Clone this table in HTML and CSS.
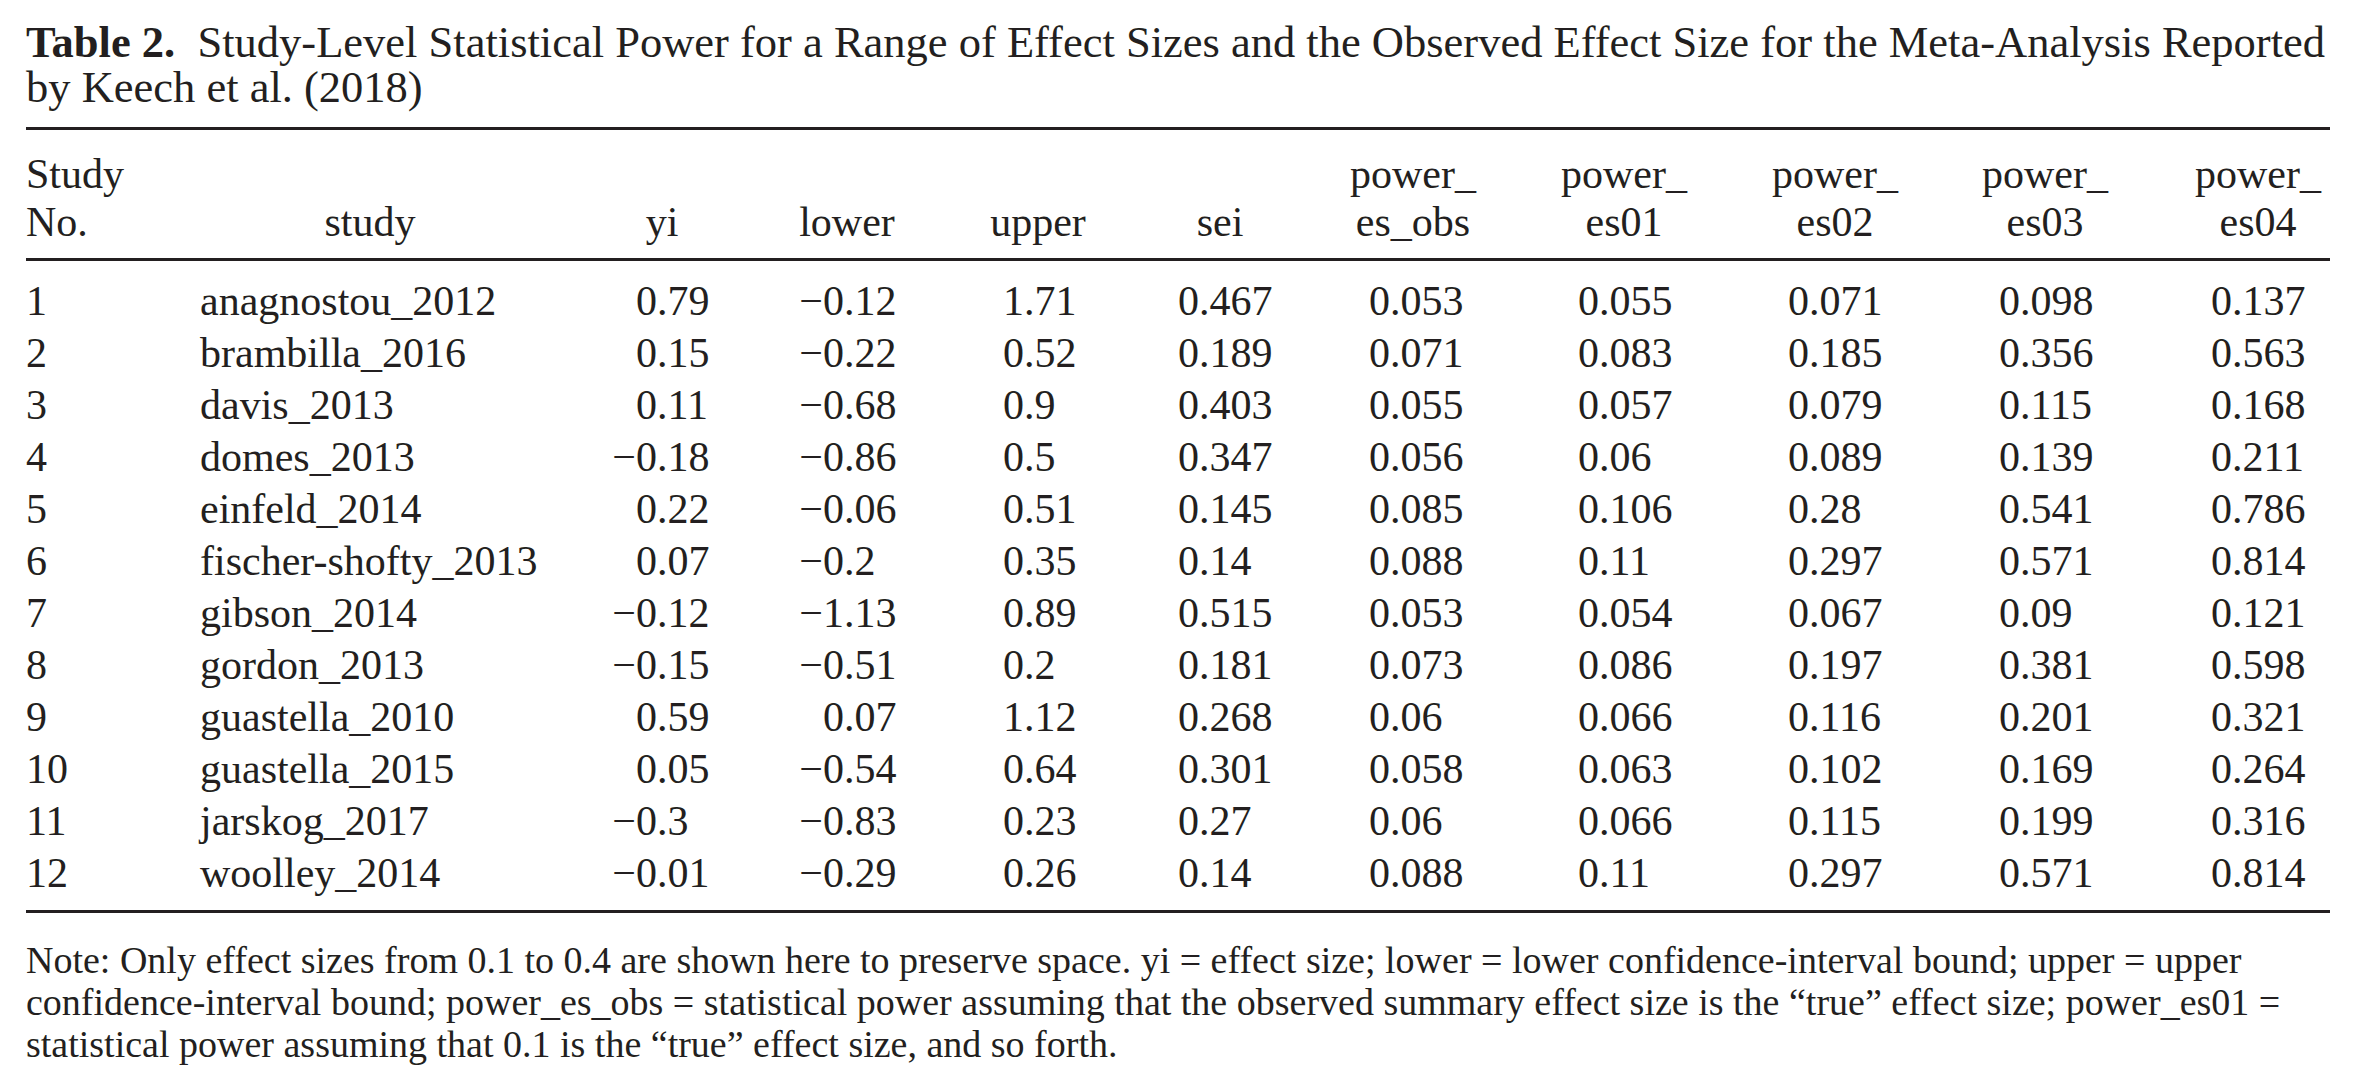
FILE: index.html
```html
<!DOCTYPE html>
<html lang="en">
<head>
<meta charset="utf-8">
<title>Table 2</title>
<link rel="stylesheet" href="styles.css">
</head>
<body>
<div class="page">
  <p class="caption"><b class="label">Table 2.</b> Study-Level Statistical Power for a Range of Effect Sizes and the Observed Effect Size for the Meta-Analysis Reported by Keech et al. (2018)</p>
  <table class="data">
    <colgroup>
      <col class="w-no"><col class="w-study"><col class="w-yi"><col class="w-lower"><col class="w-upper"><col class="w-sei"><col class="w-obs"><col class="w-es01"><col class="w-es02"><col class="w-es03"><col class="w-es04">
    </colgroup>
    <thead>
      <tr>
        <th>Study<br>No.</th>
        <th>study</th>
        <th>yi</th>
        <th>lower</th>
        <th>upper</th>
        <th>sei</th>
        <th>power_<br>es_obs</th>
        <th>power_<br>es01</th>
        <th>power_<br>es02</th>
        <th>power_<br>es03</th>
        <th>power_<br>es04</th>
      </tr>
    </thead>
    <tbody>
      <tr><td>1</td><td>anagnostou_2012</td><td>0.79</td><td><span class="m">−</span>0.12</td><td>1.71</td><td>0.467</td><td>0.053</td><td>0.055</td><td>0.071</td><td>0.098</td><td>0.137</td></tr>
      <tr><td>2</td><td>brambilla_2016</td><td>0.15</td><td><span class="m">−</span>0.22</td><td>0.52</td><td>0.189</td><td>0.071</td><td>0.083</td><td>0.185</td><td>0.356</td><td>0.563</td></tr>
      <tr><td>3</td><td>davis_2013</td><td>0.11</td><td><span class="m">−</span>0.68</td><td>0.9</td><td>0.403</td><td>0.055</td><td>0.057</td><td>0.079</td><td>0.115</td><td>0.168</td></tr>
      <tr><td>4</td><td>domes_2013</td><td><span class="m">−</span>0.18</td><td><span class="m">−</span>0.86</td><td>0.5</td><td>0.347</td><td>0.056</td><td>0.06</td><td>0.089</td><td>0.139</td><td>0.211</td></tr>
      <tr><td>5</td><td>einfeld_2014</td><td>0.22</td><td><span class="m">−</span>0.06</td><td>0.51</td><td>0.145</td><td>0.085</td><td>0.106</td><td>0.28</td><td>0.541</td><td>0.786</td></tr>
      <tr><td>6</td><td>fischer-shofty_2013</td><td>0.07</td><td><span class="m">−</span>0.2</td><td>0.35</td><td>0.14</td><td>0.088</td><td>0.11</td><td>0.297</td><td>0.571</td><td>0.814</td></tr>
      <tr><td>7</td><td>gibson_2014</td><td><span class="m">−</span>0.12</td><td><span class="m">−</span>1.13</td><td>0.89</td><td>0.515</td><td>0.053</td><td>0.054</td><td>0.067</td><td>0.09</td><td>0.121</td></tr>
      <tr><td>8</td><td>gordon_2013</td><td><span class="m">−</span>0.15</td><td><span class="m">−</span>0.51</td><td>0.2</td><td>0.181</td><td>0.073</td><td>0.086</td><td>0.197</td><td>0.381</td><td>0.598</td></tr>
      <tr><td>9</td><td>guastella_2010</td><td>0.59</td><td>0.07</td><td>1.12</td><td>0.268</td><td>0.06</td><td>0.066</td><td>0.116</td><td>0.201</td><td>0.321</td></tr>
      <tr><td>10</td><td>guastella_2015</td><td>0.05</td><td><span class="m">−</span>0.54</td><td>0.64</td><td>0.301</td><td>0.058</td><td>0.063</td><td>0.102</td><td>0.169</td><td>0.264</td></tr>
      <tr><td>11</td><td>jarskog_2017</td><td><span class="m">−</span>0.3</td><td><span class="m">−</span>0.83</td><td>0.23</td><td>0.27</td><td>0.06</td><td>0.066</td><td>0.115</td><td>0.199</td><td>0.316</td></tr>
      <tr><td>12</td><td>woolley_2014</td><td><span class="m">−</span>0.01</td><td><span class="m">−</span>0.29</td><td>0.26</td><td>0.14</td><td>0.088</td><td>0.11</td><td>0.297</td><td>0.571</td><td>0.814</td></tr>
    </tbody>
  </table>
  <p class="note">Note: Only effect sizes from 0.1 to 0.4 are shown here to preserve space. yi = effect size; lower = lower confidence-interval bound; upper = upper confidence-interval bound; power_es_obs = statistical power assuming that the observed summary effect size is the “true” effect size; power_es01 = statistical power assuming that 0.1 is the “true” effect size, and so forth.</p>
</div>
</body>
</html>
```

FILE: styles.css
```css
html, body {
  margin: 0;
  padding: 0;
  background: #ffffff;
}

body {
  font-family: "Liberation Serif", "Times New Roman", serif;
  color: #231f20;
}

.page {
  width: 2304px;
  padding: 20px 28px 0 26px;
}

.caption {
  margin: 0;
  font-size: 44.5px;
  line-height: 45px;
}

.caption .label {
  font-weight: bold;
  margin-right: 0.25em;
}

.data {
  margin-top: 17px;
  width: 2304px;
  table-layout: fixed;
  border-collapse: separate;
  border-spacing: 0;
  font-size: 42px;
}

.w-no { width: 104px; }
.w-study { width: 480px; }
.w-yi { width: 104px; }
.w-lower { width: 266px; }
.w-upper { width: 116px; }
.w-sei { width: 248px; }
.w-obs { width: 138px; }
.w-es01 { width: 284px; }
.w-es02 { width: 138px; }
.w-es03 { width: 282px; }
.w-es04 { width: 144px; }

.data th {
  font-weight: normal;
  text-align: center;
  vertical-align: bottom;
  line-height: 48px;
  padding: 20px 0 12px 0;
  border-top: 3px solid #231f20;
  border-bottom: 3px solid #231f20;
  white-space: nowrap;
}

.data th:first-child {
  text-align: left;
}

.data td {
  padding: 0;
  line-height: 52px;
  text-align: left;
  white-space: nowrap;
  overflow: visible;
}

.data tbody tr:first-child td {
  padding-top: 14px;
}

.data tbody tr:last-child td {
  padding-bottom: 11px;
  border-bottom: 3px solid #231f20;
}

.data td:nth-child(2) { padding-left: 70px; }
.data td:nth-child(3) { padding-left: 26px; }
.data td:nth-child(4) { padding-left: 109px; }
.data td:nth-child(5) { padding-left: 23px; }
.data td:nth-child(6) { padding-left: 82px; }
.data td:nth-child(7) { padding-left: 25px; }
.data td:nth-child(8) { padding-left: 96px; }
.data td:nth-child(9) { padding-left: 22px; }
.data td:nth-child(10) { padding-left: 95px; }
.data td:nth-child(11) { padding-left: 25px; }

.m {
  margin-left: -0.564em;
}

.note {
  margin: 26px 0 0 0;
  font-size: 38px;
  line-height: 42px;
}
```
